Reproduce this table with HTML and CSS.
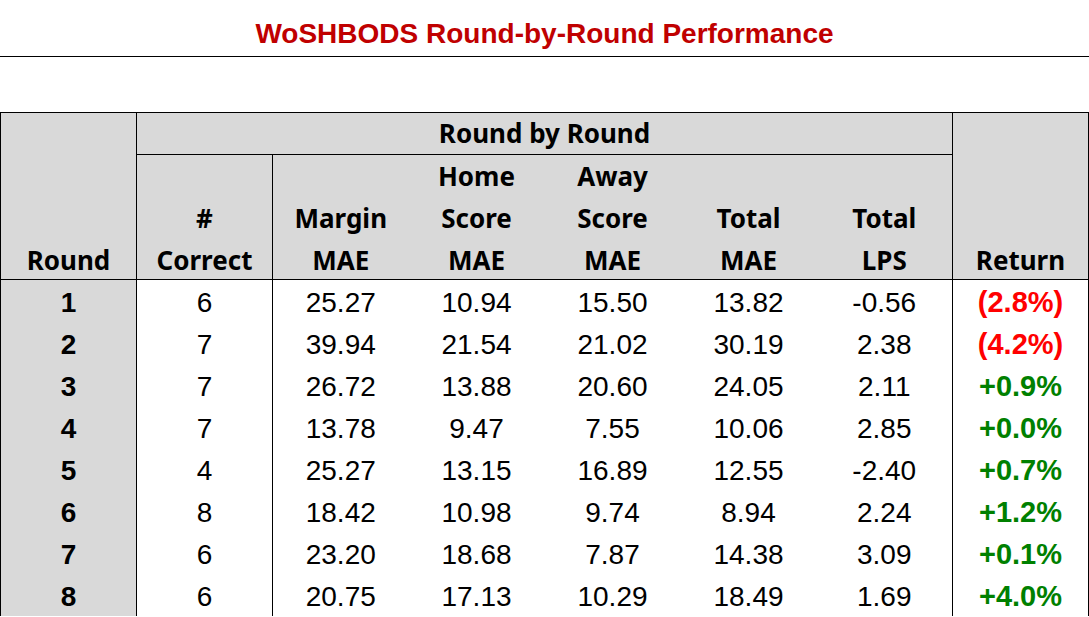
FILE: index.html
```html
<!DOCTYPE html>
<html>
<head>
<meta charset="utf-8">
<link rel="stylesheet" href="styles.css">
</head>
<body>
<div class="title">WoSHBODS Round-by-Round Performance</div>
<div class="spacer"></div>
<table class="perf">
  <colgroup>
    <col class="c"><col class="c"><col class="c"><col class="c"><col class="c"><col class="c"><col class="c"><col class="c">
  </colgroup>
  <thead>
    <tr class="h1">
      <th rowspan="2" class="round-h b-right"><div class="lines">Round</div></th>
      <th colspan="6" class="group b-right">Round by Round</th>
      <th rowspan="2" class="ret-h"><div class="lines">Return</div></th>
    </tr>
    <tr class="h2">
      <th class="b-right"><div class="lines">#<br>Correct</div></th>
      <th><div class="lines">Margin<br>MAE</div></th>
      <th><div class="lines">Home<br>Score<br>MAE</div></th>
      <th><div class="lines">Away<br>Score<br>MAE</div></th>
      <th><div class="lines">Total<br>MAE</div></th>
      <th class="b-right"><div class="lines">Total<br>LPS</div></th>
    </tr>
  </thead>
  <tbody>
    <tr><td class="rn">1</td><td class="b-right">6</td><td>25.27</td><td>10.94</td><td>15.50</td><td>13.82</td><td class="b-right">-0.56</td><td class="ret neg">(2.8%)</td></tr>
    <tr><td class="rn">2</td><td class="b-right">7</td><td>39.94</td><td>21.54</td><td>21.02</td><td>30.19</td><td class="b-right">2.38</td><td class="ret neg">(4.2%)</td></tr>
    <tr><td class="rn">3</td><td class="b-right">7</td><td>26.72</td><td>13.88</td><td>20.60</td><td>24.05</td><td class="b-right">2.11</td><td class="ret pos">+0.9%</td></tr>
    <tr><td class="rn">4</td><td class="b-right">7</td><td>13.78</td><td>9.47</td><td>7.55</td><td>10.06</td><td class="b-right">2.85</td><td class="ret pos">+0.0%</td></tr>
    <tr><td class="rn">5</td><td class="b-right">4</td><td>25.27</td><td>13.15</td><td>16.89</td><td>12.55</td><td class="b-right">-2.40</td><td class="ret pos">+0.7%</td></tr>
    <tr><td class="rn">6</td><td class="b-right">8</td><td>18.42</td><td>10.98</td><td>9.74</td><td>8.94</td><td class="b-right">2.24</td><td class="ret pos">+1.2%</td></tr>
    <tr><td class="rn">7</td><td class="b-right">6</td><td>23.20</td><td>18.68</td><td>7.87</td><td>14.38</td><td class="b-right">3.09</td><td class="ret pos">+0.1%</td></tr>
    <tr><td class="rn">8</td><td class="b-right">6</td><td>20.75</td><td>17.13</td><td>10.29</td><td>18.49</td><td class="b-right">1.69</td><td class="ret pos">+4.0%</td></tr>
  </tbody>
</table>
</body>
</html>
```
FILE: styles.css
```css
html, body {
  margin: 0;
  padding: 0;
  background: #ffffff;
}
body {
  font-family: "Liberation Sans", Arial, sans-serif;
  color: #000;
  overflow: hidden;
}
.title {
  height: 57px;
  box-sizing: border-box;
  border-bottom: 1px solid #000;
  text-align: center;
  color: #c00000;
  font-weight: 700;
  font-size: 28px;
  line-height: 67px;
  white-space: nowrap;
}
.spacer {
  height: 55px;
}
.perf {
  border-collapse: collapse;
  table-layout: fixed;
  width: 1089px;
  border-top: 1px solid #000;
  border-left: 1px solid #000;
  border-right: 1px solid #000;
}
.perf .c {
  width: 136px;
}
.perf th {
  background: #d9d9d9;
  font-family: "Noto Sans", "Liberation Sans", sans-serif;
  font-weight: 700;
  font-size: 26px;
  line-height: 42px;
  padding: 0;
  text-align: center;
  vertical-align: bottom;
}
.perf th .lines {
  margin-bottom: -2px;
}
.perf .h1 th.group {
  height: 41px;
  line-height: 41px;
  border-bottom: 1px solid #000;
  vertical-align: middle;
}
.perf .h2 th {
  height: 122px;
  border-bottom: 1px solid #000;
}
.perf .round-h, .perf .ret-h {
  border-bottom: 1px solid #000;
}
.perf .b-right {
  border-right: 1px solid #000;
}
.perf td {
  height: 39px;
  padding: 3px 0 0 0;
  font-size: 28px;
  line-height: 39px;
  text-align: center;
  white-space: nowrap;
}
.perf td.rn {
  background: #d9d9d9;
  font-weight: 700;
  border-right: 1px solid #000;
}
.perf td.ret {
  font-weight: 700;
  font-size: 29px;
}
.perf td.neg {
  color: #ff0000;
}
.perf td.pos {
  color: #008000;
}
```
